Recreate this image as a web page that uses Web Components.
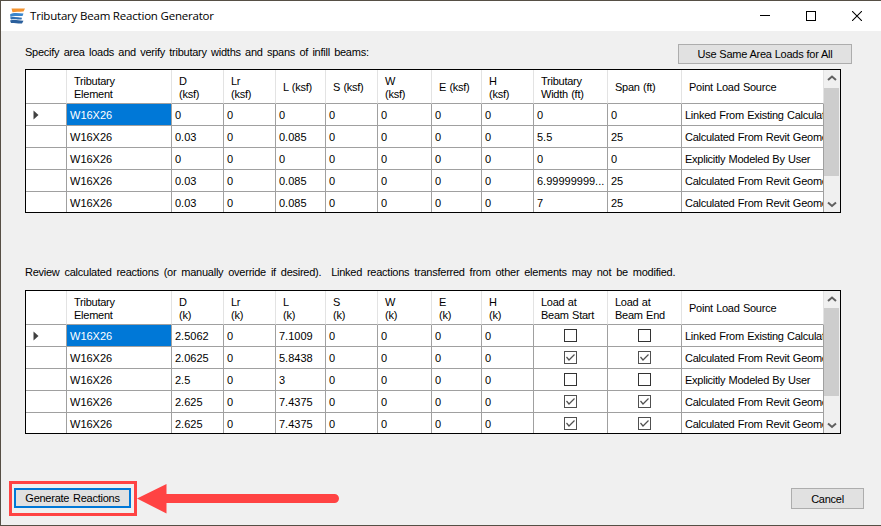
<!DOCTYPE html>
<html>
<head>
<meta charset="utf-8">
<title>Tributary Beam Reaction Generator</title>
<style>
  html, body { margin: 0; padding: 0; width: 881px; height: 526px; overflow: hidden; background: #f0f0f0; }
</style>
</head>
<body>
<reaction-window>
  <title-bar>Tributary Beam Reaction Generator</title-bar>
  <grid-section style="margin-top:13px;--label-top:2px;--label-space:1.5px" label="Specify area loads and verify tributary widths and spans of infill beams:">
    <win-button slot="action" style="width:174px;height:20px;word-spacing:.2px">Use Same Area Loads for All</win-button>
    <beam-grid id="loads" columns="41 105 52 52 50 52 54 50 52 74 74 142" thumb-top="18" thumb-height="88"></beam-grid>
  </grid-section>
  <grid-section style="margin-top:52px;--label-top:1px;--label-space:2.1px" label="Review calculated reactions (or manually override if desired).  Linked reactions transferred from other elements may not be modified.">
    <beam-grid id="reactions" columns="41 105 52 52 50 52 54 50 52 74 74 142" thumb-top="17" thumb-height="88"></beam-grid>
  </grid-section>
  <dialog-footer>
    <win-button slot="start" focused style="width:117px;height:20px">Generate Reactions</win-button>
    <win-button slot="end" style="width:73px;height:21px">Cancel</win-button>
  </dialog-footer>
  <callout-arrow></callout-arrow>
</reaction-window>

<script>
'use strict';

class ReactionWindow extends HTMLElement {
  constructor() {
    super();
    this.attachShadow({ mode: 'open' }).innerHTML = `
      <style>
        :host {
          display: flex; flex-direction: column; position: relative;
          box-sizing: border-box; width: 881px; height: 526px;
          background: #f0f0f0; border: solid #564f45; border-width: 1px 0 1px 1px;
          font: 11px "Liberation Sans", Arial, sans-serif; color: #000;
        }
      </style>
      <slot></slot>`;
  }
}

class TitleBar extends HTMLElement {
  constructor() {
    super();
    this.attachShadow({ mode: 'open' }).innerHTML = `
      <style>
        :host { display: flex; align-items: center; height: 30px; background: #fff; flex: none; }
        svg { display: block; flex: none; }
        .logo { margin: 0 5px 0 8px; }
        .text { flex: 1; font: 11.5px "Open Sans", sans-serif; letter-spacing: -0.2px; color: #000; margin-top: -1px; }
        .ctl { width: 46px; display: flex; justify-content: center; }
      </style>
      <svg class="logo" width="16" height="16" viewBox="0 0 16 16">
        <path d="M2.500 0.500H16L14.500 3.500C10 3.800 6 3.600 3.500 4.200Z" fill="#f4932f"/>
        <path d="M1 6.500C4 4.200 9 5.200 14.500 5.400L13.500 8C9 8 5 7.400 1.500 9Z" fill="#3a86cc"/>
        <path d="M1 9.500C5 8.300 9 9.400 13 9.800L12.500 11.500C8 11.400 5 10.800 2 11.600Z" fill="#2f6fb2"/>
        <path d="M1 12.500C5 11.400 9 12.400 14.500 12.800L13 15.500C9 15.700 5 14.800 2 15Z" fill="#2b5f9c"/>
      </svg>
      <div class="text"><slot></slot></div>
      <div class="ctl"><svg width="10" height="10"><path d="M0 4.500H10" stroke="#000"/></svg></div>
      <div class="ctl"><svg width="10" height="10"><rect x=".5" y=".5" width="9" height="9" fill="none" stroke="#000"/></svg></div>
      <div class="ctl" style="margin-right:1px"><svg width="10" height="10"><path d="M0 0L10 10M10 0L0 10" stroke="#000" stroke-width="1.05"/></svg></div>`;
  }
}

class GridSection extends HTMLElement {
  constructor() {
    super();
    this.attachShadow({ mode: 'open' }).innerHTML = `
      <style>
        :host { display: block; flex: none; padding: 0 29px 0 24px; }
        .head { display: flex; justify-content: space-between; align-items: flex-start; height: 20px; margin-bottom: 5px; }
        .label { white-space: pre; margin-top: var(--label-top); letter-spacing: -.25px; word-spacing: var(--label-space); }
      </style>
      <div class="head"><span class="label"></span><slot name="action"></slot></div>
      <slot></slot>`;
  }
  connectedCallback() {
    this.shadowRoot.querySelector('.label').textContent = this.getAttribute('label');
  }
}

class BeamGrid extends HTMLElement {
  constructor() {
    super();
    this.attachShadow({ mode: 'open' }).innerHTML = `
      <style>
        :host {
          display: block; box-sizing: border-box; position: relative;
          width: 816px; height: 144px; border: 1px solid #000; background: #f0f0f0; overflow: hidden;
        }
        .rows { width: 798px; height: 142px; overflow: hidden; background: #fff; }
        .bar { position: absolute; right: 0; top: 0; width: 16px; height: 142px; background: #f0f0f0; }
        .thumb { position: absolute; left: 0; width: 15px; background: #cdcdcd; }
        .bar svg { position: absolute; left: 3px; }
      </style>
      <div class="rows"><slot></slot></div>
      <div class="bar">
        <svg style="top:5px" width="10" height="7"><path d="M1 5L5 1.500L9 5" fill="none" stroke="#606060" stroke-width="2"/></svg>
        <div class="thumb"></div>
        <svg style="bottom:4px" width="10" height="7"><path d="M1 1.500L5 5L9 1.500" fill="none" stroke="#606060" stroke-width="2"/></svg>
      </div>`;
  }
  connectedCallback() {
    this.style.setProperty('--cols', this.getAttribute('columns').split(' ').map(w => w + 'px').join(' '));
    const thumb = this.shadowRoot.querySelector('.thumb');
    thumb.style.top = this.getAttribute('thumb-top') + 'px';
    thumb.style.height = this.getAttribute('thumb-height') + 'px';
  }
}

class GridRow extends HTMLElement {
  constructor() {
    super();
    this.attachShadow({ mode: 'open' }).innerHTML = `
      <style>
        :host { display: grid; grid-template-columns: var(--cols); height: 22px; }
        :host([header]) { height: 34px; }
      </style>
      <slot></slot>`;
  }
}

class GridCell extends HTMLElement {
  constructor() {
    super();
    this.attachShadow({ mode: 'open' }).innerHTML = `
      <style>
        :host {
          display: flex; align-items: center; box-sizing: border-box; min-width: 0; overflow: hidden;
          padding: 1px 0 0 3px; white-space: nowrap; line-height: 13px;
          border: solid #a0a0a0; border-width: 0 1px 1px 0; color: #000; background: #fff;
        }
        :host([head]) { padding: 2px 0 0 7px; border-right-color: #e3e3e3; white-space: normal; letter-spacing: -.25px; word-spacing: .5px; }
        :host([selected]) { background: #0078d7; color: #fff; }
        :host([center]) { justify-content: center; padding: 0; }
        :host([source]) { letter-spacing: -.25px; word-spacing: .5px; }
        :host([ellipsis]) .t { overflow: hidden; text-overflow: ellipsis; width: 100%; }
      </style>
      <span class="t"><slot></slot></span>`;
  }
}

// row pointer, drawn with its own svg so it stays inside the cell
class RowPointer extends HTMLElement {
  constructor() {
    super();
    this.attachShadow({ mode: 'open' }).innerHTML = `
      <style>:host { display: block; width: 6px; height: 10px; margin-left: 4px; }</style>
      <svg width="6" height="10" style="display:block"><path d="M0.500 0.500L5.500 5L0.500 9.500Z" fill="#404040"/></svg>`;
  }
}

class CheckMark extends HTMLElement {
  constructor() {
    super();
    this.attachShadow({ mode: 'open' });
  }
  connectedCallback() {
    const on = this.hasAttribute('checked');
    this.shadowRoot.innerHTML = `
      <style>:host { display: block; width: 13px; height: 13px; }</style>
      <svg width="13" height="13" style="display:block">
        <rect x=".5" y=".5" width="12" height="12" fill="#fff" stroke="${on ? '#505050' : '#333'}"/>
        ${on ? '<path d="M2.500 6L5 9L10.500 3.500" fill="none" stroke="#505050" stroke-width="1.2"/>' : ''}
      </svg>`;
  }
}

class WinButton extends HTMLElement {
  constructor() {
    super();
    this.attachShadow({ mode: 'open' }).innerHTML = `
      <style>
        :host {
          display: flex; align-items: center; justify-content: center; box-sizing: border-box;
          background: #e1e1e1; border: 1px solid #adadad; letter-spacing: -.25px; word-spacing: 1px; white-space: nowrap;
        }
        :host([focused]) { border: 2px solid #0078d7; }
      </style>
      <slot></slot>`;
  }
}

class DialogFooter extends HTMLElement {
  constructor() {
    super();
    this.attachShadow({ mode: 'open' }).innerHTML = `
      <style>
        :host { display: flex; justify-content: space-between; margin-top: 54px; padding: 0 17px 0 13px; }
      </style>
      <slot name="start"></slot><slot name="end"></slot>`;
  }
}

// red annotation drawn over the dialog
class CalloutArrow extends HTMLElement {
  constructor() {
    super();
    this.attachShadow({ mode: 'open' }).innerHTML = `
      <style>:host { position: absolute; left: 7px; top: 479px; width: 335px; height: 38px; pointer-events: none; }</style>
      <svg width="335" height="38" style="display:block">
        <rect x="2.500" y="2.500" width="125" height="32" fill="none" stroke="#ff4343" stroke-width="3"/>
        <path d="M129 18.500L158.500 4V14H326.500A4.500 4.500 0 0 1 326.500 23H158.500V33.500Z" fill="#ff4343"/>
      </svg>`;
  }
}

customElements.define('reaction-window', ReactionWindow);
customElements.define('title-bar', TitleBar);
customElements.define('grid-section', GridSection);
customElements.define('beam-grid', BeamGrid);
customElements.define('grid-row', GridRow);
customElements.define('grid-cell', GridCell);
customElements.define('row-pointer', RowPointer);
customElements.define('check-mark', CheckMark);
customElements.define('win-button', WinButton);
customElements.define('dialog-footer', DialogFooter);
customElements.define('callout-arrow', CalloutArrow);

const LINKED = 'Linked From Existing Calculation';
const CALC = 'Calculated From Revit Geometry';
const USER = 'Explicitly Modeled By User';

function headerRow(labels) {
  const row = document.createElement('grid-row');
  row.setAttribute('header', '');
  ['', ...labels].forEach(text => {
    const cell = document.createElement('grid-cell');
    cell.setAttribute('head', '');
    cell.innerHTML = text;
    row.append(cell);
  });
  return row;
}

function dataRow(values, index) {
  const row = document.createElement('grid-row');
  const pointer = document.createElement('grid-cell');
  if (index === 0) pointer.append(document.createElement('row-pointer'));
  row.append(pointer);
  values.forEach((v, col) => {
    const cell = document.createElement('grid-cell');
    if (v === true || v === false) {
      const box = document.createElement('check-mark');
      if (v) box.setAttribute('checked', '');
      cell.setAttribute('center', '');
      cell.append(box);
    } else {
      cell.textContent = v;
      if (String(v).endsWith('...')) cell.setAttribute('ellipsis', '');
    }
    if (col === values.length - 1) cell.setAttribute('source', '');
    if (index === 0 && col === 0) cell.setAttribute('selected', '');
    row.append(cell);
  });
  return row;
}

function fill(id, head, rows) {
  const grid = document.getElementById(id);
  grid.append(headerRow(head));
  rows.forEach((r, i) => grid.append(dataRow(r, i)));
}

fill('loads',
  ['Tributary<br>Element', 'D<br>(ksf)', 'Lr<br>(ksf)', 'L (ksf)', 'S (ksf)', 'W<br>(ksf)', 'E (ksf)', 'H<br>(ksf)', 'Tributary<br>Width (ft)', 'Span (ft)', 'Point Load Source'],
  [
    ['W16X26', '0', '0', '0', '0', '0', '0', '0', '0', '0', LINKED],
    ['W16X26', '0.03', '0', '0.085', '0', '0', '0', '0', '5.5', '25', CALC],
    ['W16X26', '0', '0', '0', '0', '0', '0', '0', '0', '0', USER],
    ['W16X26', '0.03', '0', '0.085', '0', '0', '0', '0', '6.99999999...', '25', CALC],
    ['W16X26', '0.03', '0', '0.085', '0', '0', '0', '0', '7', '25', CALC]
  ]);

fill('reactions',
  ['Tributary<br>Element', 'D<br>(k)', 'Lr<br>(k)', 'L<br>(k)', 'S<br>(k)', 'W<br>(k)', 'E<br>(k)', 'H<br>(k)', 'Load at<br>Beam Start', 'Load at<br>Beam End', 'Point Load Source'],
  [
    ['W16X26', '2.5062', '0', '7.1009', '0', '0', '0', '0', false, false, LINKED],
    ['W16X26', '2.0625', '0', '5.8438', '0', '0', '0', '0', true, true, CALC],
    ['W16X26', '2.5', '0', '3', '0', '0', '0', '0', false, false, USER],
    ['W16X26', '2.625', '0', '7.4375', '0', '0', '0', '0', true, true, CALC],
    ['W16X26', '2.625', '0', '7.4375', '0', '0', '0', '0', true, true, CALC]
  ]);
</script>
</body>
</html>
